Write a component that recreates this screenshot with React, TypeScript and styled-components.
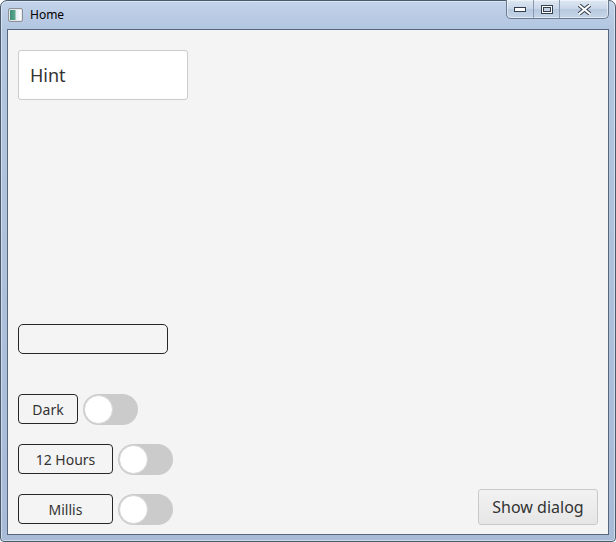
import styled, { createGlobalStyle } from 'styled-components';

const GlobalStyle = createGlobalStyle`
  html, body {
    margin: 0;
    padding: 0;
    width: 616px;
    height: 542px;
    overflow: hidden;
    background: #ffffff;
  }
  * {
    box-sizing: border-box;
  }
`;

const Window = styled.div`
  width: 616px;
  height: 542px;
  display: flex;
  flex-direction: column;
  border: 1px solid #4b5a6d;
  border-radius: 7px 7px 4px 4px;
  background: linear-gradient(180deg, #c2d3ea 0px, #b3c6e0 28px, #a8bcd7 100%);
  box-shadow: inset 0 0 0 1px rgba(255, 255, 255, 0.45);
  font-family: 'Noto Sans', 'Open Sans', sans-serif;
`;

const TitleBar = styled.div`
  height: 28px;
  display: flex;
  align-items: flex-start;
  padding-left: 7px;
  flex-shrink: 0;
`;

const AppIcon = styled.div`
  width: 15px;
  height: 14px;
  margin-top: 7px;
  border: 1px solid #8c9299;
  border-radius: 2px;
  background: linear-gradient(90deg, #3d8a7c 0, #59a68a 45%, #e8eef4 55%, #ffffff 100%);
  box-shadow: inset 0 0 0 1px #e6e6e6;
`;

const Title = styled.span`
  margin-left: 7px;
  margin-top: 6px;
  font-size: 12px;
  line-height: 16px;
  color: #000;
`;

const Spacer = styled.div`
  flex: 1;
`;

const Caption = styled.div`
  display: flex;
  height: 19px;
  margin-top: -1px;
  margin-right: 6px;
  border: 1px solid #6a7a8f;
  border-top: none;
  border-radius: 0 0 5px 5px;
  overflow: hidden;
  background: linear-gradient(180deg, #dfe8f3 0%, #c8d6e8 50%, #b8c9df 51%, #c4d4e8 100%);
  box-shadow: inset 0 0 0 1px rgba(255, 255, 255, 0.5);
`;

const CaptionButton = styled.div<{ $w: number }>`
  width: ${(p) => p.$w}px;
  display: flex;
  align-items: center;
  justify-content: center;
  & + & {
    border-left: 1px solid #8a9ab0;
  }
`;

const Client = styled.div`
  flex: 1;
  margin: 0 6px 6px 6px;
  border: 1px solid #56667b;
  background: #f4f4f4;
  display: flex;
  flex-direction: column;
  padding: 20px 10px 10px 10px;
`;

const HintField = styled.div`
  width: 170px;
  height: 50px;
  background: #ffffff;
  border: 1px solid #cbcbcb;
  border-radius: 3px;
  display: flex;
  align-items: center;
  padding-left: 11px;
  font-size: 18px;
  color: #333;
`;

const EmptyBox = styled.div`
  width: 150px;
  height: 30px;
  border: 1px solid #262626;
  border-radius: 5px;
  background: #f4f4f4;
  margin-bottom: 40px;
`;

const Rows = styled.div`
  display: flex;
  flex-direction: column;
  gap: 20px;
`;

const Row = styled.div`
  height: 30px;
  display: flex;
  align-items: flex-start;
  gap: 5px;
`;

const OptionButton = styled.div<{ $w: number }>`
  width: ${(p) => p.$w}px;
  height: 30px;
  border: 1px solid #262626;
  border-radius: 4px;
  background: #f4f4f4;
  display: flex;
  align-items: center;
  justify-content: center;
  font-size: 14px;
  color: #333;
`;

const Track = styled.div`
  width: 55px;
  height: 31px;
  flex-shrink: 0;
  border-radius: 16px;
  background: #cbcbcb;
  padding: 1px;
  display: flex;
  align-items: center;
`;

const Knob = styled.div`
  width: 29px;
  height: 29px;
  border-radius: 50%;
  background: #ffffff;
  border: 1px solid #d6d6d6;
`;

const DialogButton = styled.div`
  margin-left: auto;
  align-self: flex-end;
  flex-shrink: 0;
  width: 120px;
  height: 36px;
  border: 1px solid #c9c9c9;
  border-radius: 3px;
  background: linear-gradient(180deg, #f2f2f2 0%, #e6e6e6 100%);
  display: flex;
  align-items: center;
  justify-content: center;
  font-size: 16px;
  color: #333;
  margin-bottom: -1px;
`;

const Toggle = () => (
  <Track>
    <Knob />
  </Track>
);

export default function App() {
  return (
    <>
      <GlobalStyle />
      <Window>
        <TitleBar>
          <AppIcon />
          <Title>Home</Title>
          <Spacer />
          <Caption>
            <CaptionButton $w={26}>
              <svg width="12" height="5" viewBox="0 0 12 5">
                <rect x="0.5" y="0.5" width="11" height="4" fill="#fff" stroke="#33404f" />
              </svg>
            </CaptionButton>
            <CaptionButton $w={26}>
              <svg width="12" height="9" viewBox="0 0 12 9">
                <rect x="0.5" y="0.5" width="11" height="8" fill="#fff" stroke="#33404f" />
                <rect x="2.5" y="2.5" width="7" height="4" fill="#c6d3e3" stroke="#33404f" />
              </svg>
            </CaptionButton>
            <CaptionButton $w={49}>
              <svg width="13" height="11" viewBox="0 0 13 11">
                <path
                  d="M1 1 L12 10 M12 1 L1 10"
                  stroke="#33404f"
                  strokeWidth="4"
                  strokeLinecap="square"
                />
                <path d="M1 1 L12 10 M12 1 L1 10" stroke="#fff" strokeWidth="2" strokeLinecap="square" />
              </svg>
            </CaptionButton>
          </Caption>
        </TitleBar>
        <Client>
          <HintField>Hint</HintField>
          <Spacer />
          <EmptyBox />
          <Rows>
            <Row>
              <OptionButton $w={60}>Dark</OptionButton>
              <Toggle />
            </Row>
            <Row>
              <OptionButton $w={95}>12 Hours</OptionButton>
              <Toggle />
            </Row>
            <Row>
              <OptionButton $w={95}>Millis</OptionButton>
              <Toggle />
              <DialogButton>Show dialog</DialogButton>
            </Row>
          </Rows>
        </Client>
      </Window>
    </>
  );
}
